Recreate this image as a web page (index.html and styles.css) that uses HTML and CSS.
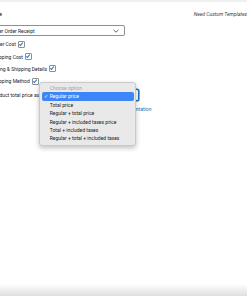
FILE: index.html
```html
<!DOCTYPE html>
<html lang="en">
<head>
  <meta charset="UTF-8">
  <meta name="viewport" content="width=device-width, initial-scale=1.0">
  <title>Receipt settings</title>
  <link rel="stylesheet" href="styles.css">
</head>
<body>
  <div class="page">
    <div class="settings">
      <!-- CABECERA -->
      <div class="head">
        <span class="title">Template</span>
        <span class="custom">Need Custom Templates</span>
      </div>

      <!-- PLANTILLA -->
      <div class="select wide">
        <span>Customer Order Receipt</span>
        <svg class="chev" width="6" height="4" viewBox="0 0 6 4"><path d="M0.5 0.8 L3 3.2 L5.5 0.8" fill="none" stroke="#50575e" stroke-width="0.9"/></svg>
      </div>

      <!-- OPCIONES -->
      <div class="row">Show Order Cost <span class="check"></span></div>
      <div class="row">Show Shipping Cost <span class="check"></span></div>
      <div class="row">Show Billing &amp; Shipping Details <span class="check"></span></div>
      <div class="row">Show Shipping Method <span class="check"></span></div>

      <div class="row price">
        <span>Show product total price as</span>
        <div class="price-field">
          <div class="select focus"><span>Regular price</span></div>
          <a class="doc" href="#">View Documentation</a>

          <!-- MENU DESPLEGADO -->
          <ul class="menu">
            <li class="muted">Choose option</li>
            <li class="on">Regular price</li>
            <li>Total price</li>
            <li>Regular + total price</li>
            <li>Regular + included taxes price</li>
            <li>Total + included taxes</li>
            <li>Regular + total + included taxes</li>
          </ul>
        </div>
      </div>
    </div>
    <div class="bottom"></div>
  </div>
</body>
</html>
```

FILE: styles.css
```css
body {
  margin: 0;
  padding: 0;
  background-color: white;
  color: #1d2327;
  font-family: Roboto, "Liberation Sans", sans-serif;
  font-size: 5px;
  overflow: hidden;
}

.page {
  width: 247px;
  height: 296px;
  display: flex;
  flex-direction: column;
  border-top: 2px solid #f0f0f1;
  box-sizing: border-box;
  overflow: hidden;
}

.settings {
  flex: 1;
  margin-left: -21.5px;
  padding-top: 8px;
}

.head {
  display: flex;
  justify-content: space-between;
  align-items: center;
  height: 7px;
}

.title {
  font-weight: 500;
  font-size: 5.5px;
  margin-left: 0.5px;
}

.custom {
  font-style: italic;
  font-size: 5px;
  color: #3c434a;
}

.select {
  box-sizing: border-box;
  height: 11px;
  border: 1px solid #8c8f94;
  border-radius: 2px;
  display: flex;
  align-items: center;
  justify-content: space-between;
  padding: 0 4px 0 2px;
  background: white;
}

.wide {
  width: 146.5px;
  margin-top: 8px;
  margin-bottom: 2px;
}

.chev {
  margin-right: 1px;
}

.row {
  display: flex;
  align-items: center;
  gap: 2px;
  height: 12.4px;
}

.check {
  width: 5px;
  height: 5px;
  border: 0.6px solid #8c8f94;
  border-radius: 1px;
  position: relative;
}

.check::after {
  content: "";
  position: absolute;
  left: 1.3px;
  top: -0.2px;
  width: 1.4px;
  height: 3px;
  border-right: 0.9px solid #2271b1;
  border-bottom: 0.9px solid #2271b1;
  transform: rotate(40deg);
}

.price {
  height: 13px;
  margin-top: 1px;
  align-items: flex-start;
}

.price > span {
  line-height: 13px;
}

.price-field {
  position: relative;
  margin-left: 0;
}

.price-field .select {
  width: 98px;
  height: 12px;
  margin-top: 0.5px;
}

.focus {
  border-color: #2271b1;
  box-shadow: 0 0 0 0.6px #2271b1;
}

.doc {
  display: block;
  margin-top: 5px;
  color: #2271b1;
  text-decoration: none;
  padding-left: 64px;
}

.menu {
  position: absolute;
  left: -2px;
  top: -7px;
  width: 97px;
  margin: 0;
  padding: 1.5px 1.5px 2px;
  box-sizing: border-box;
  list-style: none;
  background: #e9e9e9;
  border: 0.5px solid #c9c9c9;
  border-radius: 3px;
  box-shadow: 0 2px 5px rgba(0, 0, 0, 0.25);
}

.menu li {
  height: 8.4px;
  line-height: 8.4px;
  padding-left: 8px;
  color: #222;
  border-radius: 2px;
  position: relative;
}

.menu .muted {
  color: #a5a5a5;
}

.menu .on {
  background: #3d86f7;
  color: white;
}

.menu .on::before {
  content: "\2713";
  position: absolute;
  left: 2px;
}

.bottom {
  height: 12px;
  background: linear-gradient(to bottom, #ffffff, #dedede);
}
```
